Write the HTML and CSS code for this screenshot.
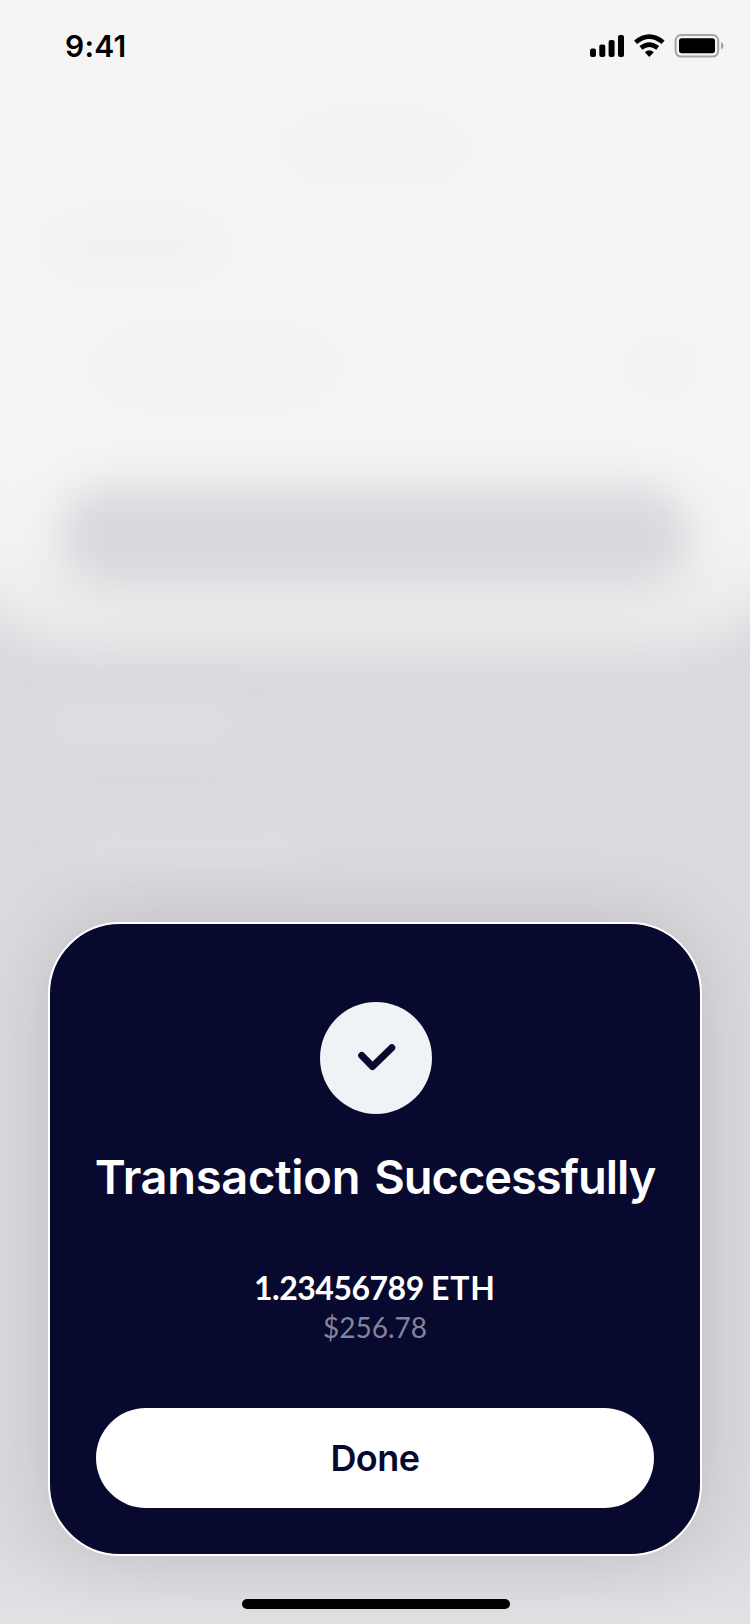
FILE: index.html
```html
<!DOCTYPE html>
<html lang="en">
<head>
<meta charset="utf-8">
<title>Transaction Successfully</title>
<link rel="stylesheet" href="styles.css">
</head>
<body>
<div class="screen">
  <div class="backdrop" aria-hidden="true">
    <div class="sheet">
      <div class="ghost ghost-title"></div>
      <div class="ghost ghost-label"></div>
      <div class="ghost-line">
        <div class="ghost ghost-field"></div>
        <div class="ghost ghost-arrow"></div>
      </div>
      <div class="ghost ghost-button"></div>
    </div>
    <div class="ghost ghost-heading"></div>
    <div class="ghost ghost-row"></div>
  </div>
  <main class="content">
    <header class="status">
      <span class="time">9:41</span>
      <svg class="status-icons" viewBox="0 0 136 24" width="136" height="24">
        <rect x="0" y="14.5" width="6" height="8.5" rx="2"/>
        <rect x="9.3" y="10.5" width="6" height="12.5" rx="2"/>
        <rect x="18.6" y="6" width="6" height="17" rx="2"/>
        <rect x="28" y="1" width="6" height="22" rx="2"/>
        <path class="wave" d="M45.5 8.3Q59.3-3.2 73.1 8.3M50.9 13.9Q59.3 7.2 67.7 13.9"/>
        <path d="M54.8 18.3Q59.3 14.2 63.8 18.3L59.8 22.5Q59.3 23 58.8 22.5Z"/>
        <rect class="case" x="85.6" y="1" width="42.6" height="21.6" rx="5.5"/>
        <rect x="89" y="4.3" width="36" height="15" rx="2.8"/>
        <path class="cap" d="M131 8Q133.6 9.2 133.6 11.8Q133.6 14.4 131 15.6Z"/>
      </svg>
    </header>
    <section class="card">
      <div class="badge">
        <svg viewBox="0 0 112 112" width="112" height="112"><path class="check" d="M41.7 53.5L52.5 64.5L71.8 45.7"/></svg>
      </div>
      <h1 class="title">Transaction <span class="title-end">Successfully</span></h1>
      <p class="amount">1.23456789 <span class="unit">ETH</span></p>
      <p class="fiat">$256.78</p>
      <button class="done" type="button">Done</button>
    </section>
    <div class="home"></div>
  </main>
</div>
</body>
</html>
```
FILE: styles.css
```css
* { box-sizing: border-box; }
body { margin: 0; }
.screen {
  display: grid;
  width: 750px;
  height: 1624px;
  overflow: hidden;
  background: linear-gradient(#dadadf 0, #dadadf 1540px, #e2e2e5 1624px);
  font-family: Lato, "Noto Sans", sans-serif;
}
.backdrop, .content { grid-area: 1 / 1; min-width: 0; height: 1624px; }
.backdrop { overflow: hidden; }
.sheet {
  height: 750px;
  margin: -100px -50px 0;
  padding: 224px 100px 0;
  border-radius: 0 0 130px 130px;
  background: linear-gradient(#f5f5f5 0, #f5f5f5 400px, #f4f4f5 560px, #f3f3f3 640px, #eaeaeb 720px);
  filter: blur(20px);
}
.ghost { filter: blur(18px); }
.ghost-title { width: 170px; height: 46px; margin: 0 auto; background: #f0f0f0; }
.ghost-label { width: 170px; height: 36px; margin-top: 58px; background: #eeeeee; }
.ghost-line { display: flex; justify-content: space-between; padding: 80px 14px 0 54px; }
.ghost-field { width: 220px; height: 34px; background: #efefef; }
.ghost-arrow { width: 50px; height: 34px; background: #f0f0f0; }
.ghost-button {
  height: 98px;
  margin: 109px 10px 0;
  border-radius: 49px;
  background: #d8d8dd;
  filter: blur(6px);
}
.ghost-heading { width: 190px; height: 40px; margin: 54px 0 0 46px; background: #dedee2; }
.ghost-row { width: 240px; height: 38px; margin: 82px 0 0 70px; background: #dddde1; }
.content {
  position: relative;
  display: flex;
  flex-direction: column;
  align-items: center;
}
.status {
  display: flex;
  justify-content: space-between;
  align-items: center;
  width: 100%;
  height: 92px;
  padding: 0 24px 0 65px;
}
.time { font: 600 30px/36px Inter, sans-serif; letter-spacing: .2px; color: #000; }
.status-icons { display: block; }
.wave { fill: none; stroke: #000; stroke-width: 4.6; }
.case { fill: none; stroke: #a5a5a5; stroke-width: 2; }
.cap { fill: #a5a5a5; }
.card {
  display: flex;
  flex-direction: column;
  align-items: center;
  width: 654px;
  height: 634px;
  margin-top: 830px;
  padding: 78px 46px 46px;
  border: 2px solid #fff;
  border-radius: 72px;
  background: #08092f;
  box-shadow: 0 0 80px rgba(0, 0, 0, .14);
  color: #fff;
}
.badge { width: 112px; height: 112px; margin-left: 2px; border-radius: 50%; background: #eff3f6; }
.badge svg { display: block; }
.check { fill: none; stroke: #08092f; stroke-width: 7; stroke-linecap: round; stroke-linejoin: round; }
.title {
  margin: 33px 0 0;
  font: 600 47px/60px Inter, sans-serif;
  letter-spacing: -.3px;
  word-spacing: 2.5px;
  white-space: nowrap;
}
.title-end { letter-spacing: -1px; }
.amount { margin: 61px 0 0; font-size: 32px; font-weight: 700; line-height: 40px; letter-spacing: -.5px; }
.unit { letter-spacing: .9px; }
.fiat { margin: 0; font-size: 28px; line-height: 38px; color: #83849a; }
.done {
  width: 558px;
  height: 100px;
  margin: auto 0 0;
  padding: 0 0 1px;
  border: 0;
  border-radius: 50px;
  background: #fff;
  color: #08092f;
  font: 600 36px/44px Inter, sans-serif;
  letter-spacing: -.5px;
}
.home { width: 268px; height: 10px; margin: 43px 0 0 2px; border-radius: 5px; background: #000; }
```
